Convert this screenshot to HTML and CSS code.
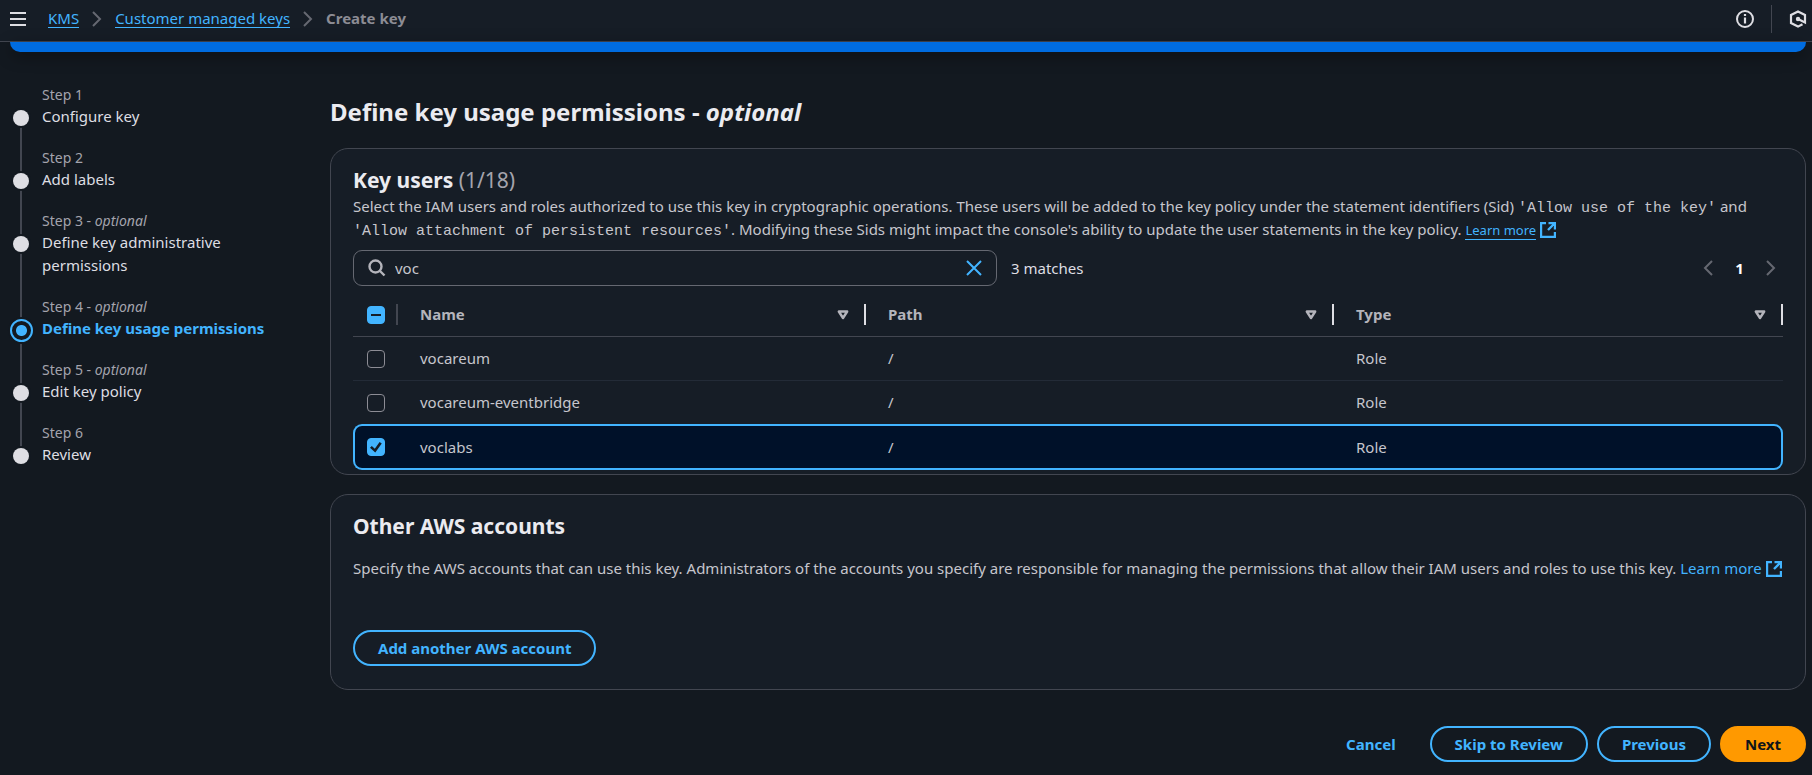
FILE: index.html
```
<!DOCTYPE html>
<html lang="en">
<head>
<meta charset="utf-8">
<title>Create key - Define key usage permissions</title>
<link rel="stylesheet" href="styles.css">
</head>
<body>
<svg class="sprite" aria-hidden="true">
  <symbol id="chevron" viewBox="0 0 16 16"><path d="M4 1l7 7-7 7" fill="none" stroke="currentColor" stroke-width="2"/></symbol>
  <symbol id="external" viewBox="0 0 16 16"><path d="M6 1H1v14h14v-5M8.500 1H15v6.500M15 1L8 8" fill="none" stroke="currentColor" stroke-width="2.400"/></symbol>
  <symbol id="caret" viewBox="0 0 12 10"><path d="M1.800 1.500h8.400L6 8z" fill="none" stroke="currentColor" stroke-width="2.400" stroke-linejoin="round"/></symbol>
</svg>

<header class="topbar">
  <button class="icon-button menu" type="button" aria-label="Open navigation">
    <svg width="16" height="16" viewBox="0 0 16 16"><path d="M0 2h16M0 8h16M0 14h16" stroke="currentColor" stroke-width="2"/></svg>
  </button>
  <nav class="crumbs" aria-label="Breadcrumbs">
    <a href="#kms">KMS</a>
    <svg class="crumb-sep" width="16" height="16"><use href="#chevron"/></svg>
    <a href="#keys">Customer managed keys</a>
    <svg class="crumb-sep" width="16" height="16"><use href="#chevron"/></svg>
    <span class="current">Create key</span>
  </nav>
  <div class="tools">
    <button class="icon-button" type="button" aria-label="Info">
      <svg width="18" height="18" viewBox="0 0 18 18"><circle cx="9" cy="9" r="8" fill="none" stroke="currentColor" stroke-width="2"/><path d="M9 4v2M9 7.500v6" stroke="currentColor" stroke-width="2.200"/></svg>
    </button>
    <span class="tool-rule"></span>
    <button class="icon-button" type="button" aria-label="Assistant">
      <svg width="18" height="18" viewBox="0 0 18 18"><path d="M13.500 14.200L9 16.600 2 13V5l7-3.600L16 5v7.500L9 9" fill="none" stroke="currentColor" stroke-width="2.200"/><circle cx="9" cy="9" r="2.200" fill="currentColor"/></svg>
    </button>
  </div>
</header>
<div class="flash"></div>

<div class="layout">
  <nav class="steps" aria-label="Steps">
    <ol>
      <li><span class="mark"></span><span class="num">Step 1</span><a href="#s1">Configure key</a></li>
      <li><span class="mark"></span><span class="num">Step 2</span><a href="#s2">Add labels</a></li>
      <li><span class="mark"></span><span class="num">Step 3 - <em>optional</em></span><a href="#s3">Define key administrative permissions</a></li>
      <li class="active"><span class="mark"></span><span class="num">Step 4 - <em>optional</em></span><a href="#s4" aria-current="step">Define key usage permissions</a></li>
      <li><span class="mark"></span><span class="num">Step 5 - <em>optional</em></span><a href="#s5">Edit key policy</a></li>
      <li><span class="mark"></span><span class="num">Step 6</span><a href="#s6">Review</a></li>
    </ol>
  </nav>

  <main class="content">
    <h1>Define key usage permissions - <em>optional</em></h1>

    <section class="card users">
      <h2>Key users <span class="count">(1/18)</span></h2>
      <p>Select the IAM users and roles authorized to use this key in cryptographic operations. These users will be added to the key policy under the statement identifiers (Sid) <code>'Allow use of the key'</code> and <code>'Allow attachment of persistent resources'</code>. Modifying these Sids might impact the console's ability to update the user statements in the key policy. <a class="learn small" href="#learn-sid"><span>Learn more</span><svg width="16" height="16"><use href="#external"/></svg></a></p>

      <div class="filter">
        <div class="search">
          <svg width="18" height="18" viewBox="0 0 18 18"><circle cx="7.500" cy="7.500" r="6" fill="none" stroke="currentColor" stroke-width="2.400"/><path d="M12 12l4.500 4.500" stroke="currentColor" stroke-width="2.400"/></svg>
          <input type="text" value="voc" aria-label="Find key users">
          <button class="icon-button clear" type="button" aria-label="Clear"><svg width="16" height="16" viewBox="0 0 16 16"><path d="M1 1l14 14M15 1L1 15" stroke="currentColor" stroke-width="2"/></svg></button>
        </div>
        <span class="matches">3 matches</span>
        <div class="pager">
          <button class="icon-button prev" type="button" aria-label="Previous page"><svg width="16" height="16"><use href="#chevron"/></svg></button>
          <button class="page" type="button">1</button>
          <button class="icon-button" type="button" aria-label="Next page"><svg width="16" height="16"><use href="#chevron"/></svg></button>
        </div>
      </div>

      <table>
        <colgroup><col class="col-check"><col class="col-name"><col class="col-path"><col class="col-type"></colgroup>
        <thead>
          <tr>
            <th class="check"><div class="head"><input id="all" type="checkbox" aria-label="Select all"></div></th>
            <th><div class="head">Name<svg width="12" height="10"><use href="#caret"/></svg></div></th>
            <th><div class="head">Path<svg width="12" height="10"><use href="#caret"/></svg></div></th>
            <th><div class="head">Type<svg width="12" height="10"><use href="#caret"/></svg></div></th>
          </tr>
        </thead>
        <tbody>
          <tr><td class="check"><input type="checkbox" aria-label="vocareum"></td><td>vocareum</td><td>/</td><td>Role</td></tr>
          <tr><td class="check"><input type="checkbox" aria-label="vocareum-eventbridge"></td><td>vocareum-eventbridge</td><td>/</td><td>Role</td></tr>
          <tr class="selected"><td class="check"><input type="checkbox" checked aria-label="voclabs"></td><td>voclabs</td><td>/</td><td>Role</td></tr>
        </tbody>
      </table>
    </section>

    <section class="card accounts">
      <h2>Other AWS accounts</h2>
      <p>Specify the AWS accounts that can use this key. Administrators of the accounts you specify are responsible for managing the permissions that allow their IAM users and roles to use this key. <a class="learn" href="#learn-accounts"><span>Learn more</span><svg width="16" height="16"><use href="#external"/></svg></a></p>
      <button class="btn" type="button">Add another AWS account</button>
    </section>

    <div class="actions">
      <button class="btn link" type="button">Cancel</button>
      <button class="btn" type="button">Skip to Review</button>
      <button class="btn" type="button">Previous</button>
      <button class="btn primary" type="button">Next</button>
    </div>
  </main>
</div>
<script src="script.js"></script>
</body>
</html>
```
FILE: script.js
```
document.getElementById("all").indeterminate = true;
```
FILE: styles.css
```
:root {
  --page: #131920;
  --surface: #161d26;
  --line: #424650;
  --accent: #42b4ff;
  --text: #c6c6cd;
  --bright: #ebebf0;
  --muted: #a4a4ad;
  --dim: #656871;
}
* { box-sizing: border-box; }
body {
  margin: 0;
  background: var(--page);
  color: var(--text);
  font: 15px/23px "Noto Sans", "Open Sans", sans-serif;
}
h1, h2, p, ol { margin: 0; padding: 0; }
a { color: var(--accent); }
button, input { font: inherit; color: inherit; }
svg { display: block; flex: none; }
.sprite { position: absolute; width: 0; height: 0; }
.icon-button { display: block; padding: 0; border: 0; background: none; }

.topbar {
  display: flex;
  align-items: center;
  height: 42px;
  padding: 0 5px 4px 10px;
  background: var(--surface);
  border-bottom: 1px solid var(--line);
}
.menu { color: #dedee3; }
.crumbs { display: flex; align-items: center; gap: 10px; margin-left: 22px; }
.crumbs a { line-height: 18px; text-decoration: none; border-bottom: 1px solid var(--accent); }
.crumb-sep { color: var(--dim); }
.current { color: #8c8c94; font-weight: 700; line-height: 18px; border-bottom: 1px solid transparent; }
.tools { display: flex; align-items: center; gap: 17px; margin-left: auto; color: #dedee3; }
.tool-rule { width: 1px; height: 28px; background: var(--line); }
.flash {
  height: 10px;
  margin: 0 6px 0 10px;
  background: #006ce0;
  border-radius: 0 0 12px 12px;
  box-shadow: 0 4px 16px #0006;
}

.layout { display: flex; padding: 32px 6px 15px 10px; }
.steps { flex: 0 0 320px; padding-top: 1px; }
.steps ol { list-style: none; }
.steps li {
  position: relative;
  padding: 0 60px 20px 32px;
}
.steps li:not(:last-child)::before {
  content: "";
  position: absolute;
  left: 10px;
  top: 34px;
  width: 2px;
  height: 100%;
  background: var(--line);
}
.mark {
  position: absolute;
  left: 3px;
  top: 25px;
  width: 16px;
  height: 16px;
  border-radius: 50%;
  background: #dedee3;
  box-shadow: 0 0 0 2px var(--page);
  z-index: 1;
}
.active .mark {
  left: 0;
  top: 22px;
  width: 23px;
  height: 23px;
  border: 2px solid var(--accent);
  background: radial-gradient(circle, var(--accent) 5px, var(--page) 6px);
}
.num { display: block; color: var(--muted); font-size: 14px; line-height: 20px; }
.steps a { display: block; color: #dedee3; line-height: 23px; text-decoration: none; }
.steps .active a { color: var(--accent); font-weight: 700; }

.content { flex: 1; min-width: 0; }
h1 { margin: 12px 0 20px; color: var(--bright); font-size: 24px; line-height: 32px; }
h2 { color: var(--bright); font-size: 21px; line-height: 28px; }
.count { color: var(--muted); font-weight: 400; }
.card {
  padding: 17px 22px;
  background: var(--surface);
  border: 1px solid var(--line);
  border-radius: 18px;
}
code { font: 15px/15px "Liberation Mono", monospace; }
.learn { white-space: nowrap; text-decoration: none; }
.learn svg { display: inline-block; vertical-align: -3px; margin-left: 4px; }
.learn.small { font-size: 13px; }
.learn.small span { border-bottom: 1px solid var(--accent); }

.users { padding-bottom: 4px; }
.users p { margin-top: 1px; }
.filter { display: flex; align-items: center; margin-top: 8px; }
.search {
  display: flex;
  align-items: center;
  flex: 0 1 644px;
  height: 36px;
  padding: 0 14px;
  border: 1px solid var(--dim);
  border-radius: 9px;
}
.search svg { color: #b4b4bb; }
.search input { flex: 1; min-width: 0; margin-left: 9px; padding: 0; border: 0; outline: 0; background: none; }
.search .clear svg { color: var(--accent); }
.matches { margin-left: 14px; color: #dedee3; }
.pager { display: flex; align-items: center; margin-left: auto; padding-right: 4px; color: var(--dim); }
.prev { transform: rotate(180deg); }
.page { width: 47px; padding: 0; border: 0; background: none; color: #fff; font-weight: 700; }

table {
  width: 100%;
  margin-top: 7px;
  border-collapse: separate;
  border-spacing: 0;
  table-layout: fixed;
}
.col-check { width: 45px; }
.col-name, .col-path { width: 468px; }
th { padding: 0; height: 44px; border-bottom: 1px solid var(--line); color: #b4b4bb; text-align: left; }
.head {
  display: flex;
  align-items: center;
  justify-content: space-between;
  height: 21px;
  padding: 0 15px 0 22px;
  border-right: 2px solid #dedee3;
}
.check .head { border-color: var(--line); padding: 0 0 0 14px; }
td { height: 44px; padding: 0 0 0 22px; border-bottom: 1px solid #232b37; }
td.check { padding-left: 14px; }
tr:nth-child(2) td { height: 43px; border-bottom: 0; }
.selected td { height: 46px; background: #001129; border: 2px solid var(--accent); border-width: 2px 0; }
.selected td:first-child { padding-left: 12px; border-left-width: 2px; border-radius: 9px 0 0 9px; }
.selected td:last-child { border-right-width: 2px; border-radius: 0 9px 9px 0; }
input[type="checkbox"] {
  appearance: none;
  display: grid;
  place-items: center;
  width: 18px;
  height: 18px;
  margin: 0;
  border: 1px solid #8c8c94;
  border-radius: 4px;
}
input[type="checkbox"]:checked, input[type="checkbox"]:indeterminate { border-color: var(--accent); background: var(--accent); }
input[type="checkbox"]:indeterminate::before { content: ""; width: 10px; height: 2px; background: var(--surface); }
input[type="checkbox"]:checked::before {
  content: "";
  width: 12px;
  height: 12px;
  background: var(--surface);
  clip-path: polygon(0 56%, 15% 42%, 40% 64%, 80% 8%, 98% 20%, 44% 96%);
}

.accounts { margin-top: 19px; padding-bottom: 23px; }
.accounts p { margin: 17px 0 50px; }
.btn {
  height: 36px;
  padding: 0 23px;
  border: 2px solid var(--accent);
  border-radius: 18px;
  background: none;
  color: var(--accent);
  font-weight: 700;
}
.actions { display: flex; justify-content: flex-end; gap: 9px; margin-top: 36px; }
.link { border-color: transparent; }
.primary { border-color: #ff9900; background: #ff9900; color: #0f141a; }
```
